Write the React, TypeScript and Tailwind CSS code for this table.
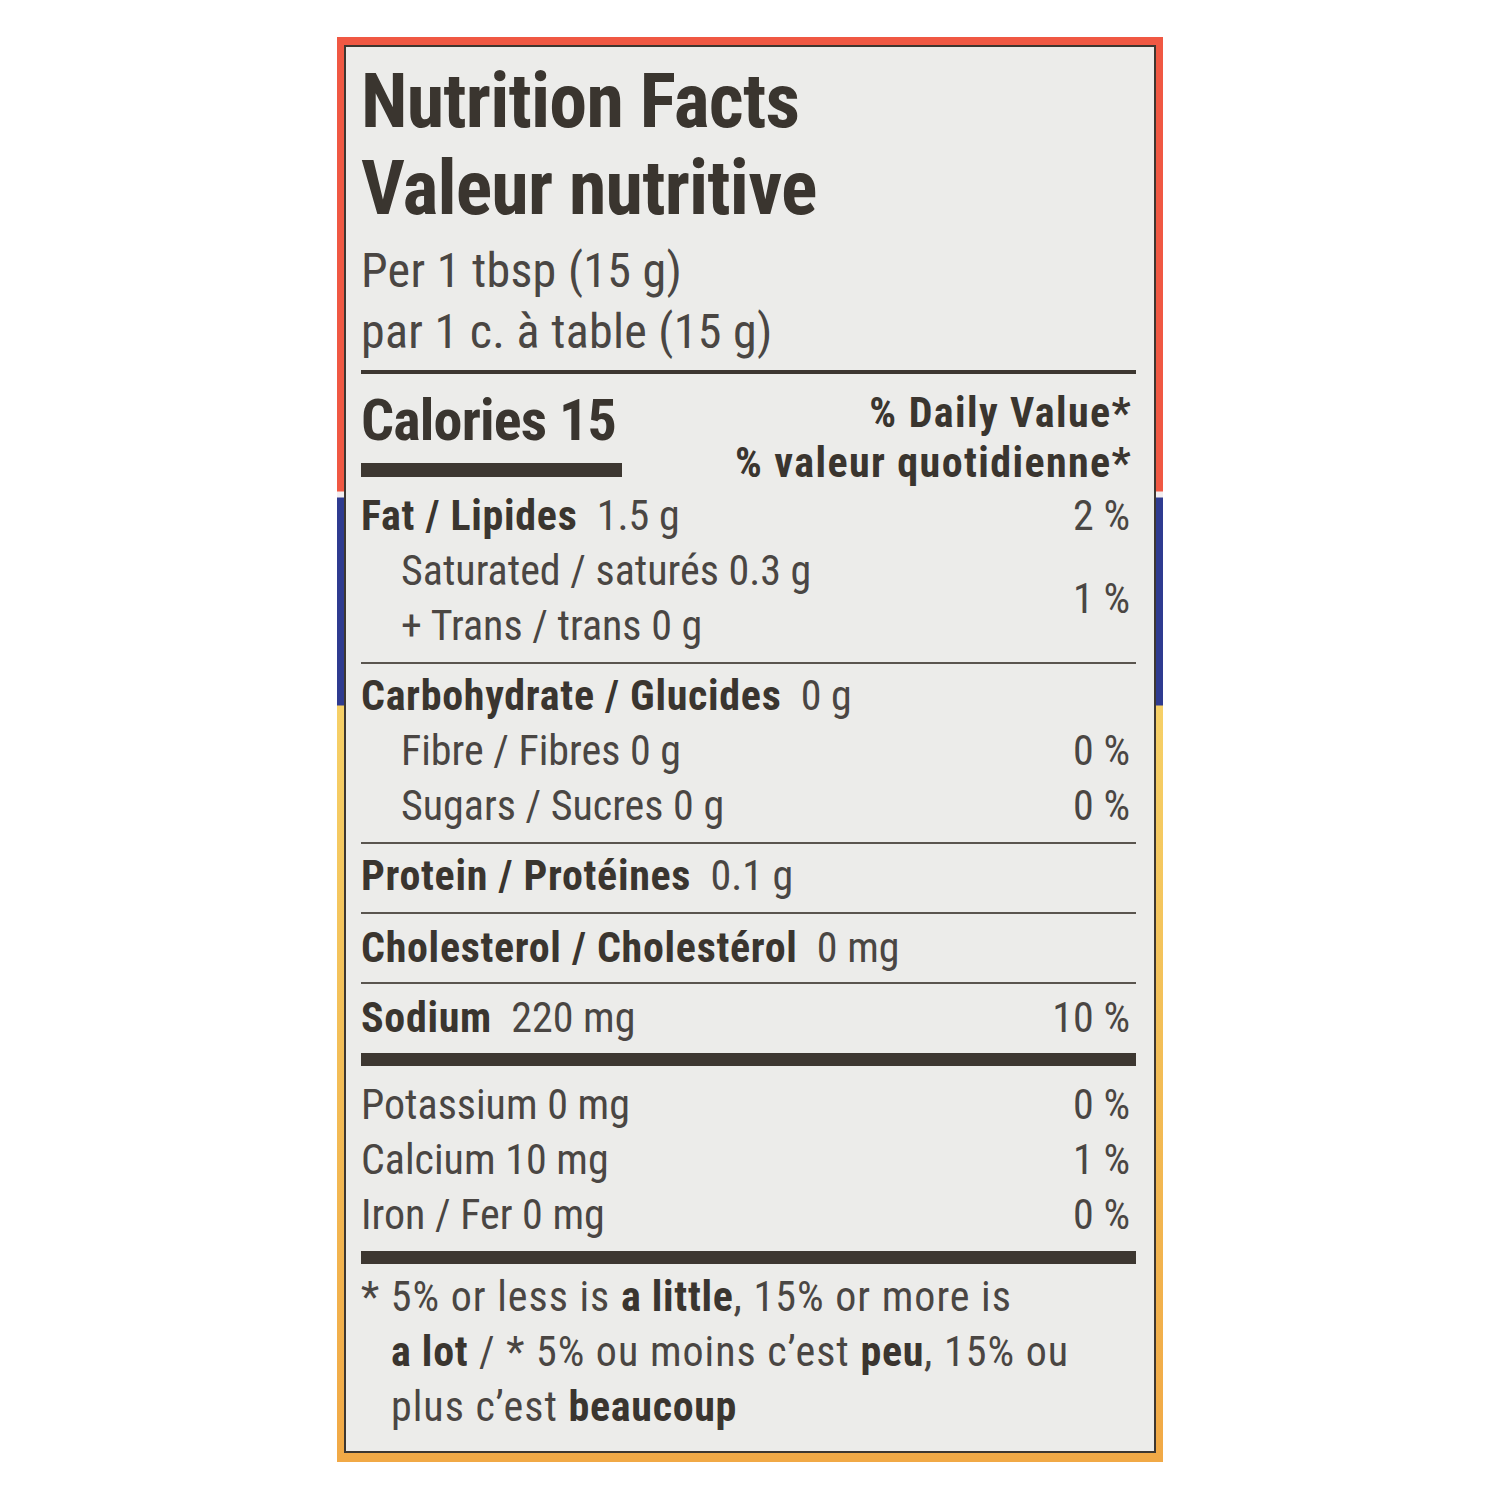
import React from "react";

const B = ({ children }: { children: React.ReactNode }) => (
  <span className="font-bold text-[#3a352f] tracking-[0.7px]">{children}</span>
);

const Row = ({
  children,
  pct,
  indent = false,
}: {
  children: React.ReactNode;
  pct?: string;
  indent?: boolean;
}) => (
  <div className="flex justify-between items-start h-[55px] leading-[55px] pr-[6px]">
    <div className={indent ? "pl-[40px] whitespace-nowrap" : "whitespace-nowrap"}>{children}</div>
    {pct && <div className="whitespace-nowrap">{pct}</div>}
  </div>
);

const Thin = ({ mt, mb }: { mt: string; mb: string }) => (
  <div className={`h-[2px] bg-[#5a554f] ${mt} ${mb}`} />
);

export default function App() {
  return (
    <div className="w-[1500px] h-[1500px] bg-white pt-[37px]">
      <div className="mx-auto w-[826px] h-[1425px] pt-[8px] pl-[7px] pr-[7px] pb-[9px] bg-[linear-gradient(180deg,#f05843_0px,#f05843_454px,#f3eef0_455px,#f3eef0_460px,#2f3b90_461px,#2f3b90_668px,#f6d067_669px,#f3bf58_1000px,#f1a946_1425px)]">
        <div className="h-full border-2 border-[#3d3731] bg-[#ececea] pl-[15px] pr-[18px] pt-[11px] font-['Liberation_Sans_Narrow','Roboto_Condensed','DejaVu_Sans_Condensed',sans-serif] text-[#4a4643] text-[42px] tracking-[0px]">
          {/* Title */}
          <div className="font-bold text-[76px] leading-[87px] text-[#3a352f] tracking-[-0.8px]">
            <div>Nutrition Facts</div>
            <div>Valeur nutritive</div>
          </div>
          <div className="mt-[8px] text-[48px] leading-[61px] tracking-[0.3px]">
            <div>Per 1 tbsp (15 g)</div>
            <div>par 1 c. à table (15 g)</div>
          </div>
          <div className="mt-[8px] h-[4px] bg-[#3d3731]" />

          {/* Calories */}
          <div className="flex justify-between items-start">
            <div className="mt-[15px]">
              <div className="font-bold text-[58px] leading-[62px] text-[#3a352f] tracking-[-0.8px]">Calories 15</div>
              <div className="mt-[12px] h-[14px] w-[261px] bg-[#3d3731]" />
            </div>
            <div className="mt-[14px] text-right font-bold text-[42px] leading-[50px] text-[#3a352f] pr-[4px] tracking-[1.4px]">
              <div>% Daily Value*</div>
              <div>% valeur quotidienne*</div>
            </div>
          </div>

          {/* Fat */}
          <div className="mt-[0px]">
            <Row pct="2 %">
              <B>Fat / Lipides</B>&nbsp; 1.5 g
            </Row>
            <div className="flex justify-between items-center pr-[6px]">
              <div className="pl-[40px] whitespace-nowrap">
                <div className="h-[55px] leading-[55px]">Saturated / saturés 0.3 g</div>
                <div className="h-[55px] leading-[55px]">+ Trans / trans 0 g</div>
              </div>
              <div className="leading-[55px]">1 %</div>
            </div>
          </div>
          <Thin mt="mt-[9px]" mb="mb-[4px]" />

          <Row>
            <B>Carbohydrate / Glucides</B>&nbsp; 0 g
          </Row>
          <Row indent pct="0 %">
            Fibre / Fibres 0 g
          </Row>
          <Row indent pct="0 %">
            Sugars / Sucres 0 g
          </Row>
          <Thin mt="mt-[9px]" mb="mb-[4px]" />

          <Row>
            <B>Protein / Protéines</B>&nbsp; 0.1 g
          </Row>
          <Thin mt="mt-[9px]" mb="mb-[6px]" />

          <Row>
            <B>Cholesterol / Cholestérol</B>&nbsp; 0 mg
          </Row>
          <Thin mt="mt-[7px]" mb="mb-[6px]" />

          <Row pct="10 %">
            <B>Sodium</B>&nbsp; 220 mg
          </Row>
          <div className="mt-[8px] h-[13px] bg-[#3d3731]" />

          <div className="mt-[11px]">
            <Row pct="0 %">Potassium 0 mg</Row>
            <Row pct="1 %">Calcium 10 mg</Row>
            <Row pct="0 %">Iron / Fer 0 mg</Row>
          </div>
          <div className="mt-[9px] h-[13px] bg-[#3d3731]" />

          {/* Footnote */}
          <div className="mt-[5px] leading-[55px] whitespace-nowrap tracking-[1px]">
            <div>
              * 5% or less is <B>a little</B>, 15% or more is
            </div>
            <div className="pl-[30px]">
              <B>a lot</B> / * 5% ou moins c’est <B>peu</B>, 15% ou
            </div>
            <div className="pl-[30px]">
              plus c’est <B>beaucoup</B>
            </div>
          </div>
        </div>
      </div>
    </div>
  );
}
